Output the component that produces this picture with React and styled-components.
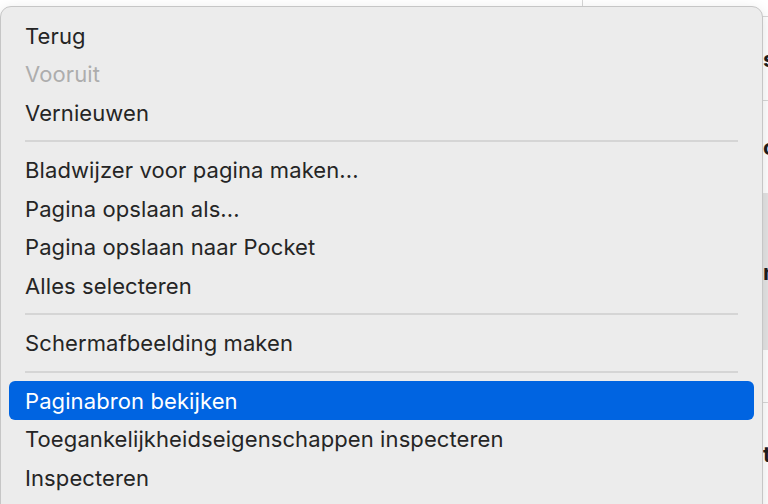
import React from "react";
import styled, { createGlobalStyle } from "styled-components";

const Global = createGlobalStyle`
  html, body { margin: 0; padding: 0; }
  body {
    width: 768px;
    height: 504px;
    overflow: hidden;
    background: #ffffff;
    font-family: Inter, "Liberation Sans", Arial, sans-serif;
  }
`;

const Page = styled.div`
  position: relative;
  width: 768px;
  height: 504px;
  display: flex;
  background: #ffffff;
  overflow: hidden;
`;

const MainArea = styled.div`
  flex: none;
  width: 582px;
  background: #ffffff;
`;

const Sidebar = styled.div`
  flex: 1;
  min-width: 0;
  overflow: hidden;
  border-left: 1px solid #d6d6d6;
  display: flex;
  flex-direction: column;
  padding-top: 16px;
`;

const SideRow = styled.div`
  flex: none;
  height: ${(p) => p.$h}px;
  background: ${(p) => (p.$gray ? "#e4e4e4" : "#ffffff")};
  border-top: ${(p) => (p.$line ? "1px solid #d8d8d8" : "none")};
  display: flex;
  align-items: center;
  padding-left: 180px;
  font-size: 22px;
  font-weight: 700;
  color: #1e1e1e;
  box-sizing: border-box;
  white-space: nowrap;
`;

const Menu = styled.div`
  position: absolute;
  top: 6px;
  left: 0;
  width: 763px;
  height: 520px;
  box-sizing: border-box;
  padding: 9px 8px;
  background: #ececec;
  border: 1px solid #c6c6c6;
  border-radius: 11px;
  box-shadow: 0 4px 14px rgba(0, 0, 0, 0.12);
  display: flex;
  flex-direction: column;
`;

const Item = styled.div`
  height: 38.5px;
  flex: none;
  box-sizing: border-box;
  display: flex;
  align-items: center;
  padding: 1px 0 0 16px;
  border-radius: 6px;
  font-size: 22px;
  letter-spacing: 0.1px;
  color: ${(p) => (p.$active ? "#ffffff" : p.$disabled ? "#adadad" : "#252525")};
  background: ${(p) => (p.$active ? "#0064e1" : "transparent")};
  white-space: nowrap;
`;

const Separator = styled.div`
  flex: none;
  height: 19px;
  display: flex;
  align-items: center;
  padding: 0 16px;
  &::after {
    content: "";
    flex: 1;
    height: 2px;
    background: #d5d5d5;
  }
`;

const groups = [
  [{ label: "Terug" }, { label: "Vooruit", disabled: true }, { label: "Vernieuwen" }],
  [
    { label: "Bladwijzer voor pagina maken..." },
    { label: "Pagina opslaan als..." },
    { label: "Pagina opslaan naar Pocket" },
    { label: "Alles selecteren" },
  ],
  [{ label: "Schermafbeelding maken" }],
  [
    { label: "Paginabron bekijken", active: true },
    { label: "Toegankelijkheidseigenschappen inspecteren" },
    { label: "Inspecteren" },
  ],
];

export default function App() {
  return (
    <>
      <Global />
      <Page>
        <MainArea />
        <Sidebar>
          <SideRow $h={84} $line>s</SideRow>
          <SideRow $h={93} $line>o</SideRow>
          <SideRow $h={157} $gray>n</SideRow>
          <SideRow $h={52} />
          <SideRow $h={102} $line>t</SideRow>
        </Sidebar>
        <Menu>
          {groups.map((g, gi) => (
            <React.Fragment key={gi}>
              {gi > 0 && <Separator />}
              {g.map((it) => (
                <Item key={it.label} $disabled={it.disabled} $active={it.active}>
                  {it.label}
                </Item>
              ))}
            </React.Fragment>
          ))}
        </Menu>
      </Page>
    </>
  );
}
